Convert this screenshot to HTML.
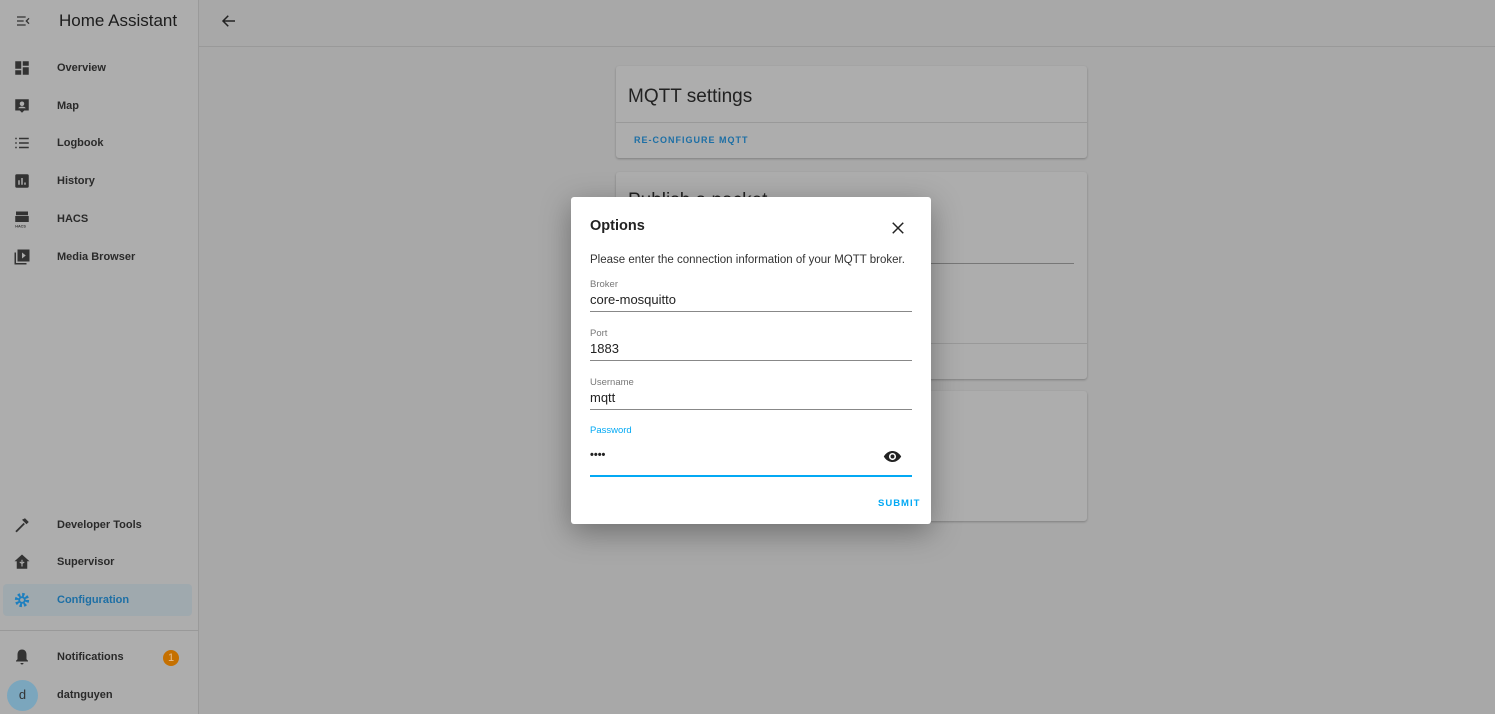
<!DOCTYPE html>
<html><head><style>
*{box-sizing:border-box;margin:0;padding:0}
body{width:1495px;height:714px;overflow:hidden;font-family:"Liberation Sans",Roboto,sans-serif;background:#a8a8a8;position:relative}
.sb{position:absolute;left:0;top:0;width:199px;height:714px;background:#adadad;border-right:1px solid #9a9a9a}
.hdr{position:absolute;left:0;top:0;width:1495px;height:47px;border-bottom:1px solid #999}
.title{position:absolute;left:59px;top:11px;font-size:17px;color:#1c1c1c}
.item{position:absolute;left:0;width:199px;height:38px;font-size:11px;font-weight:bold;color:#2a2a2a}
.item span{position:absolute;left:57px;top:13px}
.item svg{position:absolute;left:13px;top:10px}
.card{position:absolute;left:616px;width:471px;background:#adadad;border-radius:3px;box-shadow:0 1px 2px rgba(0,0,0,.25)}
.dlg{position:absolute;left:571px;top:197px;width:360px;height:327px;background:#fff;border-radius:3px;box-shadow:0 8px 30px rgba(0,0,0,.35)}
.lab{position:absolute;left:19px;font-size:9.5px;color:#777}
.val{position:absolute;left:19px;font-size:13px;color:#222}
.ln{position:absolute;left:19px;width:322px;height:1px;background:#888}
</style></head><body>
<div class="sb">
<svg style="position:absolute;left:15px;top:13px" width="16" height="16" viewBox="0 0 24 24"><path d="M3 6h13M3 12h10M3 18h13M21 8l-4 4 4 4" stroke="#333" stroke-width="2" fill="none"/></svg>
<div class="title">Home Assistant</div>
<div class="item" style="top:49px"><svg width="18" height="18" viewBox="0 0 24 24"><path fill="#333" d="M3 3h8v10H3zM13 3h8v6h-8zM13 11h8v10h-8zM3 15h8v6H3z"/></svg><span>Overview</span></div>
<div class="item" style="top:87px"><svg width="18" height="18" viewBox="0 0 24 24"><path fill="#333" d="M3 3h18v15h-6l-3 3-3-3H3z"/><circle cx="12" cy="9" r="3" fill="#adadad"/><path d="M7 15c1-3 9-3 10 0z" fill="#adadad"/></svg><span>Map</span></div>
<div class="item" style="top:124px"><svg width="18" height="18" viewBox="0 0 24 24"><path stroke="#333" stroke-width="2" d="M8 6h13M8 12h13M8 18h13M3 6h2M3 12h2M3 18h2"/></svg><span>Logbook</span></div>
<div class="item" style="top:162px"><svg width="18" height="18" viewBox="0 0 24 24"><rect x="3" y="3" width="18" height="18" rx="2" fill="#333"/><path stroke="#adadad" stroke-width="2" d="M8 17v-6M12 17V8M16 17v-3"/></svg><span>History</span></div>
<div class="item" style="top:200px"><svg width="18" height="18" viewBox="0 0 24 24"><path fill="#333" d="M4 2h16v5H4zM3 8h18v8H3z"/><text x="3" y="23" font-size="5" fill="#333">HACS</text></svg><span>HACS</span></div>
<div class="item" style="top:238px"><svg width="18" height="18" viewBox="0 0 24 24"><path fill="#333" d="M6 2h16v16H6z"/><path fill="#adadad" d="M12 6v8l5-4z"/><path stroke="#333" stroke-width="2" fill="none" d="M3 6v15h15"/></svg><span>Media Browser</span></div>
<div class="item" style="top:506px"><svg width="18" height="18" viewBox="0 0 24 24"><path stroke="#333" stroke-width="2.5" d="M4 21L15 10"/><path fill="#333" d="M12 5l4-2 5 5-3 3z"/></svg><span>Developer Tools</span></div>
<div class="item" style="top:543px"><svg width="18" height="18" viewBox="0 0 24 24"><path fill="#333" d="M12 2L2 11h3v10h14V11h3z"/><path stroke="#adadad" stroke-width="1.5" fill="none" d="M12 9v9M9 12l3 2 3-2"/></svg><span>Supervisor</span></div>
<div style="position:absolute;left:3px;top:584px;width:189px;height:32px;background:#9fa9ae;border-radius:4px"></div>
<div class="item" style="top:581px;color:#1d6fa5"><svg width="18" height="18" viewBox="0 0 24 24"><circle cx="12" cy="12" r="7" fill="none" stroke="#1d7fbf" stroke-width="5" stroke-dasharray="3 2.5"/><circle cx="12" cy="12" r="5" fill="#1d7fbf"/><circle cx="12" cy="12" r="2.5" fill="#9fa9ae"/></svg><span>Configuration</span></div>
<div style="position:absolute;left:0;top:630px;width:199px;height:1px;background:#999"></div>
<div class="item" style="top:638px"><svg width="18" height="18" viewBox="0 0 24 24"><path fill="#333" d="M12 2c-4 0-6 3-6 7v6l-2 2v1h16v-1l-2-2V9c0-4-2-7-6-7zM10 20h4a2 2 0 0 1-4 0z"/></svg><span>Notifications</span></div>
<div style="position:absolute;left:163px;top:650px;width:16px;height:16px;border-radius:50%;background:#c57000;color:#e8c090;font-size:11px;text-align:center;line-height:16px">1</div>
<div style="position:absolute;left:7px;top:680px;width:31px;height:31px;border-radius:50%;background:#7ba6bd;color:#333;font-size:13px;text-align:center;line-height:29px">d</div>
<div class="item" style="top:676px"><span>datnguyen</span></div>
</div>
<div class="hdr" style="left:199px;width:1296px"><svg style="position:absolute;left:21px;top:12px" width="18" height="18" viewBox="0 0 24 24"><path d="M20 12H5M11 5l-7 7 7 7" stroke="#222" stroke-width="2" fill="none"/></svg></div>
<div class="card" style="top:66px;height:92px"><div style="position:absolute;left:12px;top:20px;font-size:19px;color:#222">MQTT settings</div><div style="position:absolute;left:0;top:56px;width:100%;height:1px;background:#999"></div><div style="position:absolute;left:18px;top:69px;font-size:9px;font-weight:bold;letter-spacing:1px;color:#1d6fa5">RE-CONFIGURE MQTT</div></div>
<div class="card" style="top:172px;height:207px"><div style="position:absolute;left:12px;top:18px;font-size:19px;color:#222">Publish a packet</div><div style="position:absolute;left:314px;top:91px;width:144px;height:1px;background:#777"></div><div style="position:absolute;left:0;top:171px;width:100%;height:1px;background:#999"></div></div>
<div class="card" style="top:391px;height:130px"></div>
<div class="dlg">
<div style="position:absolute;left:19px;top:21px;font-size:14.5px;font-weight:bold;color:#222">Options</div>
<svg style="position:absolute;left:318px;top:22px" width="18" height="18" viewBox="0 0 24 24"><path d="M5 5l14 14M19 5L5 19" stroke="#222" stroke-width="2"/></svg>
<div style="position:absolute;left:19px;top:57px;font-size:11.5px;color:#333">Please enter the connection information of your MQTT broker.</div>
<div class="lab" style="top:82px">Broker</div><div class="val" style="top:95px">core-mosquitto</div><div class="ln" style="top:114px"></div>
<div class="lab" style="top:131px">Port</div><div class="val" style="top:144px">1883</div><div class="ln" style="top:163px"></div>
<div class="lab" style="top:180px">Username</div><div class="val" style="top:193px">mqtt</div><div class="ln" style="top:212px"></div>
<div class="lab" style="top:228px;color:#03a9f4">Password</div><div class="val" style="top:252px;font-size:11px;font-weight:bold">••••</div>
<svg style="position:absolute;left:312px;top:250px" width="19" height="19" viewBox="0 0 24 24"><path fill="#222" d="M12 5C7 5 3 8.5 1 12c2 3.5 6 7 11 7s9-3.5 11-7c-2-3.5-6-7-11-7zm0 11.5a4.5 4.5 0 1 1 0-9 4.5 4.5 0 0 1 0 9zm0-7a2.5 2.5 0 1 0 0 5 2.5 2.5 0 0 0 0-5z"/></svg>
<div class="ln" style="top:278px;height:2px;background:#03a9f4"></div>
<div style="position:absolute;left:307px;top:301px;font-size:9.5px;font-weight:bold;letter-spacing:1px;color:#03a9f4">SUBMIT</div>
</div>
</body></html>
